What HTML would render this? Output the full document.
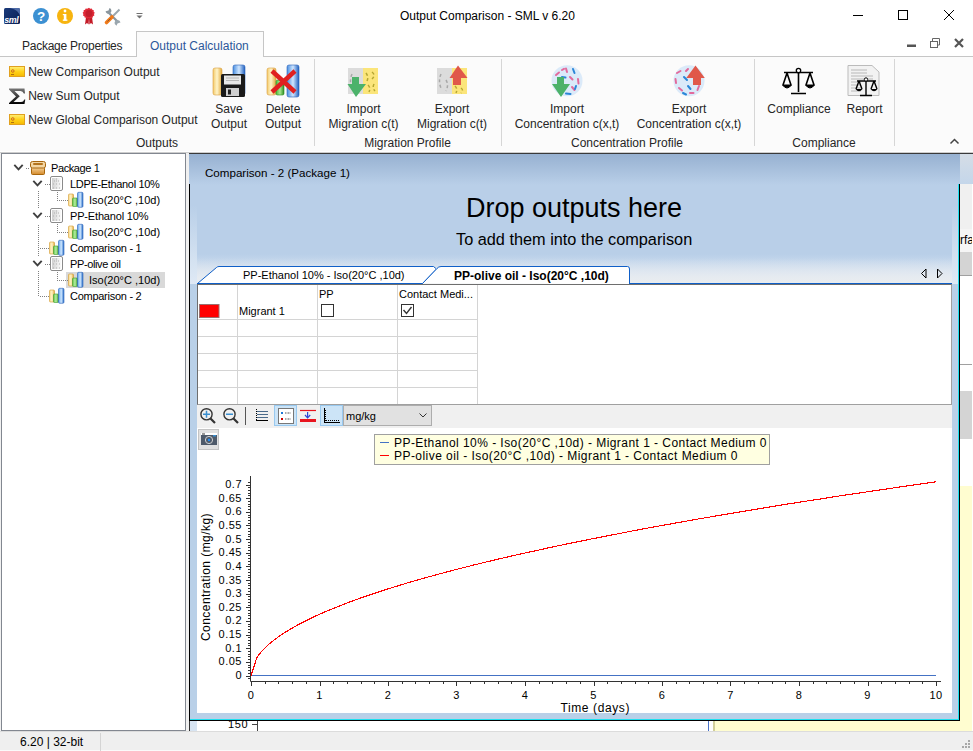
<!DOCTYPE html>
<html><head><meta charset="utf-8">
<style>
*{box-sizing:border-box}
html,body{margin:0;padding:0}
body{width:973px;height:751px;position:relative;overflow:hidden;background:#fff;font-family:"Liberation Sans",sans-serif;color:#1e1e1e}
.a{position:absolute}
.t{position:absolute;white-space:nowrap;line-height:1}
.s12{font-size:12px}
.s11{font-size:11px}
.lab{font-size:11px;letter-spacing:.5px;color:#000}
.rb{color:#262626}
.c{width:200px;text-align:center}
</style></head><body>

<!-- ===== TITLE BAR ===== -->
<div class="a" id="title" style="left:0;top:0;width:973px;height:31px;background:#fff"></div>
<div class="t s12" style="left:400px;top:10px;color:#000">Output Comparison - SML v 6.20</div>
<svg class="a" style="left:0;top:0" width="973" height="56" viewBox="0 0 973 56">
 <defs>
  <linearGradient id="smlg" x1="0" y1="0" x2="1" y2="1"><stop offset="0" stop-color="#1a3a7a"/><stop offset="1" stop-color="#0a1f55"/></linearGradient>
 </defs>
 <rect x="4" y="8" width="16" height="16" rx="1.5" fill="url(#smlg)"/>
 <path d="M10 8 H18.5 Q20 8 20 9.5 V17 Q19 9.5 10 8Z" fill="#4e6aa6"/>
 <text x="4.2" y="22.6" font-family="Liberation Sans" font-weight="bold" font-style="italic" font-size="8.8" letter-spacing="-0.3" fill="#fff">sml</text>
 <circle cx="41" cy="16" r="8" fill="#3c90d2"/>
 <text x="41.2" y="21" text-anchor="middle" font-family="Liberation Sans" font-weight="bold" font-size="13.5" fill="#fff">?</text>
 <circle cx="65" cy="16" r="8" fill="#f7b40f"/>
 <rect x="63.8" y="14" width="2.6" height="6.5" fill="#fff"/><rect x="62.8" y="19.5" width="4.6" height="1.3" fill="#fff"/><rect x="62.8" y="14" width="2" height="1.2" fill="#fff"/>
 <circle cx="65" cy="11" r="1.4" fill="#fff"/>
 <path d="M86 17 L85 24.5 L87 23 L88.6 24.5 L89 18Z M89 18 L89.4 24.5 L91 23 L93 24.5 L92 17Z" fill="#c41a26"/>
 <path d="M89 7.8 l1.2 1 1.5-.4 .6 1.4 1.5.4 -.1 1.5 1.1 1.1 -.8 1.3 .4 1.5 -1.4.6 -.4 1.5 -1.5-.1 -1.1 1.1 -1.3-.8 -1.3.8 -1.1-1.1 -1.5.1 -.4-1.5 -1.4-.6 .4-1.5 -.8-1.3 1.1-1.1 -.1-1.5 1.5-.4 .6-1.4 1.5.4Z" fill="#e02a38"/>
 <circle cx="89" cy="13.6" r="3.5" fill="#c41e2c"/>
 <path d="M108 12 L118 22" stroke="#8a969e" stroke-width="2.2"/>
 <path d="M105.5 11.5 a3 3 0 1 0 4 -3.5 l-1 2.5 -2 0.5z" fill="#8a969e"/>
 <path d="M120.5 22.5 a3 3 0 1 0 -4 3.2 l1 -2.3 2 -0.6z" fill="#9aa6ae"/>
 <path d="M119.5 9.5 L113 16" stroke="#9aa6ae" stroke-width="2"/>
 <path d="M112 17 L106.5 22.5" stroke="#f07a1a" stroke-width="3.6" stroke-linecap="round"/>
 <path d="M110.5 18.5 L107.5 21.5" stroke="#8a5a30" stroke-width="1"/>
 <path d="M136.5 13.5H142.5" stroke="#707070" stroke-width="1"/>
 <path d="M136.5 15.5 L139.5 18.5 L142.5 15.5Z" fill="#707070"/>
 <!-- window controls -->
 <path d="M853 15.5H863" stroke="#000" stroke-width="1"/>
 <rect x="898.5" y="10.5" width="9" height="9" fill="none" stroke="#000" stroke-width="1"/>
 <path d="M944 10 L954 20 M954 10 L944 20" stroke="#000" stroke-width="1"/>
 <!-- mdi buttons -->
 <rect x="907" y="44.5" width="9" height="2.5" fill="#555"/>
 <rect x="930.5" y="41.5" width="7" height="6" fill="none" stroke="#666" stroke-width="1"/>
 <path d="M932.5 41.5V38.5H939.5V45H937.5" fill="none" stroke="#666" stroke-width="1"/>
 <path d="M955 39 L963 47 M963 39 L955 47" stroke="#555" stroke-width="2.2"/>
</svg>

<!-- ===== TAB ROW ===== -->
<div class="a" style="left:0;top:56px;width:973px;height:1px;background:#c6c6c6"></div>
<div class="t s12" style="left:22px;top:40px;color:#262626;letter-spacing:-0.25px">Package Properties</div>
<div class="a" style="left:136px;top:31px;width:128px;height:26px;border:1px solid #c6c6c6;border-bottom:none;background:#fbfbfb"></div>
<div class="t s12" style="left:150px;top:40px;color:#2b579a">Output Calculation</div>

<!-- ===== RIBBON ===== -->
<div class="a" style="left:0;top:57px;width:973px;height:95px;background:#fbfbfb"></div>
<div class="a" style="left:0;top:151px;width:973px;height:1px;background:#fff"></div>
<div class="a" style="left:0;top:152px;width:973px;height:1px;background:#cdcdcd"></div>
<div class="a" style="left:314px;top:59px;width:1px;height:87px;background:#d6d6d6"></div>
<div class="a" style="left:501px;top:59px;width:1px;height:87px;background:#d6d6d6"></div>
<div class="a" style="left:754px;top:59px;width:1px;height:87px;background:#d6d6d6"></div>
<div class="a" style="left:894px;top:59px;width:1px;height:87px;background:#d6d6d6"></div>

<div class="t s12 rb" style="left:28.2px;top:66px">New Comparison Output</div>
<div class="t s12 rb" style="left:28.2px;top:90px">New Sum Output</div>
<div class="t s12 rb" style="left:28.2px;top:114px">New Global Comparison Output</div>

<div class="t s12 rb c" style="left:129px;top:103px">Save</div>
<div class="t s12 rb c" style="left:129px;top:118px">Output</div>
<div class="t s12 rb c" style="left:183px;top:103px">Delete</div>
<div class="t s12 rb c" style="left:183px;top:118px">Output</div>
<div class="t s12 rb c" style="left:263.5px;top:103px">Import</div>
<div class="t s12 rb c" style="left:263.5px;top:118px">Migration c(t)</div>
<div class="t s12 rb c" style="left:352px;top:103px">Export</div>
<div class="t s12 rb c" style="left:352px;top:118px">Migration c(t)</div>
<div class="t s12 rb c" style="left:467px;top:103px">Import</div>
<div class="t s12 rb c" style="left:467px;top:118px">Concentration c(x,t)</div>
<div class="t s12 rb c" style="left:589px;top:103px">Export</div>
<div class="t s12 rb c" style="left:589px;top:118px">Concentration c(x,t)</div>
<div class="t s12 rb c" style="left:699px;top:103px">Compliance</div>
<div class="t s12 rb c" style="left:764.5px;top:103px">Report</div>

<div class="t s12 rb c" style="left:57px;top:137px">Outputs</div>
<div class="t s12 rb c" style="left:307.5px;top:137px">Migration Profile</div>
<div class="t s12 rb c" style="left:527px;top:137px">Concentration Profile</div>
<div class="t s12 rb c" style="left:724px;top:137px">Compliance</div>

<svg class="a" style="left:0;top:57px" width="973" height="95" viewBox="0 57 973 95">
 <defs>
  <linearGradient id="ycard" x1="0" y1="0" x2="0" y2="1"><stop offset="0" stop-color="#fff07a"/><stop offset=".5" stop-color="#ffd21a"/><stop offset="1" stop-color="#f5b800"/></linearGradient>
  <linearGradient id="sig" x1="0" y1="0" x2="0" y2="1"><stop offset="0" stop-color="#777"/><stop offset="1" stop-color="#000"/></linearGradient>
  <linearGradient id="by" x1="0" x2="1"><stop offset="0" stop-color="#f3c96a"/><stop offset=".45" stop-color="#fff4c8"/><stop offset="1" stop-color="#e2a83a"/></linearGradient>
  <linearGradient id="bg2" x1="0" x2="1"><stop offset="0" stop-color="#4cb83a"/><stop offset=".5" stop-color="#a8e890"/><stop offset="1" stop-color="#2e8e22"/></linearGradient>
  <linearGradient id="bb2" x1="0" x2="1"><stop offset="0" stop-color="#4a8ee0"/><stop offset=".5" stop-color="#cfe6ff"/><stop offset="1" stop-color="#1f5fbf"/></linearGradient>
 </defs>
 <!-- small cards -->
 <g id="card"><rect x="9.5" y="66.5" width="15" height="10" fill="url(#ycard)" stroke="#e0a020" stroke-width="1"/><circle cx="12.8" cy="71" r="1.3" fill="none" stroke="#c05020" stroke-width=".8"/><path d="M11 74.5h3" stroke="#b07010" stroke-width="1"/></g>
 <use href="#card" transform="translate(0,48)"/>
 <path d="M9 88.5 H24.5 L25 93.5 H23.8 Q23 91 20.5 91 H14.5 L19.8 96.3 L13.5 102 H21 Q23.5 102 24.3 99.5 H25.3 L24.5 104 H9 V103 L16 96.5 L9 89.5Z" fill="url(#sig)"/>
 <!-- save icon -->
 <rect x="213" y="68" width="9" height="27" rx="2" fill="url(#by)" stroke="#d9a040" stroke-width=".6"/>
 <rect x="233" y="65" width="12" height="30" rx="2" fill="url(#bb2)" stroke="#2a62b8" stroke-width=".6"/>
 <rect x="221" y="74" width="24" height="23" rx="1.5" fill="#1a1a1a"/>
 <rect x="224" y="75.5" width="17" height="9" fill="#e8e8e8"/>
 <path d="M226 78h13 M226 80.5h13" stroke="#aaa" stroke-width=".8"/>
 <rect x="226" y="88" width="13" height="8" fill="#cfcfcf"/>
 <rect x="228" y="89.5" width="3" height="5" fill="#222"/>
 <!-- delete icon -->
 <rect x="267" y="68" width="9" height="27" rx="2" fill="url(#by)" stroke="#d9a040" stroke-width=".6"/>
 <rect x="276" y="80" width="8" height="15" rx="1.5" fill="url(#bg2)" stroke="#2e8e22" stroke-width=".6"/>
 <rect x="287" y="65" width="12" height="32" rx="2" fill="url(#bb2)" stroke="#2a62b8" stroke-width=".6"/>
 <path d="M272 71 L295 92 M295 71 L272 92" stroke="#e02020" stroke-width="4.5"/>
 <!-- import migration -->
 <rect x="348" y="68" width="15" height="26" fill="#dcdcdc"/>
 <rect x="363" y="68" width="15" height="26" fill="#fbe57a"/>
 <g fill="none" stroke="#a8a8a8" stroke-width="1.5" stroke-dasharray="3 2.5"><path d="M352 74 Q349 81 352 88"/><path d="M357 80 Q360 85 357 91"/></g>
 <g fill="none" stroke="#b5a632" stroke-width="1.5" stroke-dasharray="3 2.5"><path d="M366 73 Q369 77 367 81 M372 72 Q376 75 372 79 M368 85 Q371 88 369 92 M374 84 Q372 88 375 91"/></g>
 <path d="M352 77 H359 V84 H366 L356 97 L347.5 84 H352Z" fill="#4cb26a"/>
 <!-- export migration -->
 <rect x="437" y="68" width="15" height="26" fill="#dcdcdc"/>
 <rect x="452" y="68" width="15" height="26" fill="#fbe57a"/>
 <g fill="none" stroke="#a8a8a8" stroke-width="1.5" stroke-dasharray="3 2.5"><path d="M441 74 Q438 81 441 88"/><path d="M446 80 Q449 85 446 91"/></g>
 <g fill="none" stroke="#b5a632" stroke-width="1.5" stroke-dasharray="3 2.5"><path d="M455 86 Q458 89 456 93 M461 88 Q464 90 461 93"/></g>
 <path d="M453 85 V78 H449.5 L458 65.5 L467.5 78 H461 V85Z" fill="#e0584a"/>
 <!-- import concentration -->
 <circle cx="567" cy="80.7" r="15.5" fill="#dbeaf9"/>
 <g fill="none" stroke="#e26a9c" stroke-width="2" stroke-linecap="round"><path d="M556 75 L559 72.5 M566 68.5 L567 72 M570 77 L572.5 79.5 M578 79 L578.5 83.5 M572 87 L574.5 90 M558 81.5 L561 83.5 M562 70 L564 68.8"/></g>
 <g fill="none" stroke="#2a86d8" stroke-width="2" stroke-linecap="round"><path d="M573 69 L574.5 73 M562 77 L565.5 77.5 M566 93.5 L570.5 94 M576 86 L575 89"/></g>
 <path d="M557 77 H564 V84 H570 L561 97 L552 84 H557Z" fill="#4cb26a"/>
 <!-- export concentration -->
 <circle cx="689" cy="80.7" r="15.5" fill="#dbeaf9"/>
 <g fill="none" stroke="#e26a9c" stroke-width="2" stroke-linecap="round"><path d="M677 73 L680.5 71 M675.5 79 L676 83 M679 88 L682 90.5 M686 71 L688 69 M699 86 L697.5 90 M690 93 L693.5 93"/></g>
 <g fill="none" stroke="#2a86d8" stroke-width="2" stroke-linecap="round"><path d="M684 77 L687 80 M688 86 L690.5 89 M683 93 L686 94.5 M694 79 L695 82"/></g>
 <path d="M693 85 V78 H686.3 L695.5 65.5 L704.8 78 H701 V85Z" fill="#e0584a"/>
 <!-- compliance scale -->
 <g stroke="#000" stroke-width="1.6" fill="none">
  <path d="M798.5 72 V92 M791 93.5 H806 M784 72.5 H813"/>
  <path d="M787 73 L783 85 M787 73 L791 85 M810 73 L806 85 M810 73 L814 85"/>
 </g>
 <circle cx="798.5" cy="70.5" r="2.2" fill="#fff" stroke="#000" stroke-width="1.3"/>
 <path d="M782.5 85 H791.5 Q787 91 782.5 85Z M805.5 85 H814.5 Q810 91 805.5 85Z" fill="#000" stroke="#000" stroke-width="1"/>
 <!-- report -->
 <path d="M848 65.5 H872 L879 72 V95.5 H848Z" fill="#f2f2f2" stroke="#bbb" stroke-width="1"/>
 <g stroke="#b8b8b8" stroke-width="1"><path d="M851 70h16 M851 73h16 M851 76h22 M851 79h22 M851 82h10 M851 85h10 M851 88h10 M851 91h10"/></g>
 <g stroke="#000" stroke-width="1.4" fill="none">
  <path d="M866 80 V95 M860 95.5 H872 M857 81 H876"/>
  <path d="M859 81 L856 89 M859 81 L862 89 M874 81 L871 89 M874 81 L877 89"/>
 </g>
 <circle cx="866" cy="79.5" r="1.7" fill="#fff" stroke="#000" stroke-width="1"/>
 <path d="M855.5 89 H862.5 Q859 93.5 855.5 89Z M870.5 89 H877.5 Q874 93.5 870.5 89Z" fill="#000"/>
 <!-- collapse -->
 <path d="M950.5 143.5 L954.5 139.5 L958.5 143.5" fill="none" stroke="#444" stroke-width="1.5"/>
</svg>

<!-- ===== TREE PANEL ===== -->
<div class="a" style="left:0;top:153px;width:186px;height:578px;background:#f0f0f0"></div>
<div class="a" style="left:1px;top:153px;width:185px;height:578px;background:#fff;border:1px solid #828790"></div>

<svg class="a" style="left:0;top:153px" width="186" height="160" viewBox="0 153 186 160">
<defs>
<linearGradient id="gy" x1="0" x2="1"><stop offset="0" stop-color="#f7d88a"/><stop offset=".5" stop-color="#fff3c8"/><stop offset="1" stop-color="#e0a93a"/></linearGradient>
<linearGradient id="gg" x1="0" x2="1"><stop offset="0" stop-color="#5cc24a"/><stop offset=".5" stop-color="#b8f0a0"/><stop offset="1" stop-color="#3a9a2a"/></linearGradient>
<linearGradient id="gb" x1="0" x2="1"><stop offset="0" stop-color="#5a9ee8"/><stop offset=".5" stop-color="#d0e8ff"/><stop offset="1" stop-color="#2a6ec8"/></linearGradient>
<linearGradient id="gp" x1="0" y1="0" x2="0" y2="1"><stop offset="0" stop-color="#f6d29a"/><stop offset="1" stop-color="#d48a2a"/></linearGradient>
<linearGradient id="gdoc" x1="0" x2="1"><stop offset="0" stop-color="#d0d0d0"/><stop offset="1" stop-color="#fafafa"/></linearGradient>
<g id="bars"><rect x="0.5" y="2" width="5" height="12" rx="1" fill="url(#gy)" stroke="#d49a30" stroke-width=".6"/><rect x="4.5" y="6" width="5" height="8.5" rx="1" fill="url(#gg)" stroke="#3c9a2c" stroke-width=".6"/><rect x="9.5" y="0.3" width="5.5" height="15" rx="1.2" fill="url(#gb)" stroke="#2a62b8" stroke-width=".6"/></g>
</defs>
<path d="M14.3 164.8 L18.5 169.3 L22.7 164.8" fill="none" stroke="#404040" stroke-width="1.9"/>
<g transform="translate(30,161)"><rect x="1.5" y="6.5" width="13" height="7" rx="1" fill="url(#gp)" stroke="#a8660c" stroke-width="1"/><rect x="0.5" y="0.5" width="15" height="6.5" rx="2" fill="#f3d6a4" stroke="#a8660c" stroke-width="1"/><rect x="3" y="2" width="10" height="2" rx="1" fill="#b4741e"/></g>
<path d="M33.3 180.8 L37.5 185.3 L41.7 180.8" fill="none" stroke="#404040" stroke-width="1.9"/>
<rect x="50.5" y="176.5" width="12" height="14" rx="1.5" fill="#fff" stroke="#8a8a8a" stroke-width="1"/><rect x="52" y="178.0" width="9" height="11" fill="url(#gdoc)"/><g fill="#b0b0b0"><rect x="54" y="180.5" width="1" height="1"/><rect x="56" y="180.5" width="1" height="1"/><rect x="58" y="180.5" width="1" height="1"/><rect x="53" y="183.5" width="1" height="1"/><rect x="56" y="183.5" width="1" height="1"/><rect x="59" y="183.5" width="1" height="1"/><rect x="53" y="187.5" width="1" height="1"/><rect x="56" y="187.5" width="1" height="1"/><rect x="59" y="187.5" width="1" height="1"/><rect x="56" y="178.5" width="1" height="1"/></g>
<use href="#bars" transform="translate(68,192)"/>
<path d="M33.3 212.8 L37.5 217.3 L41.7 212.8" fill="none" stroke="#404040" stroke-width="1.9"/>
<rect x="50.5" y="208.5" width="12" height="14" rx="1.5" fill="#fff" stroke="#8a8a8a" stroke-width="1"/><rect x="52" y="210.0" width="9" height="11" fill="url(#gdoc)"/><g fill="#b0b0b0"><rect x="54" y="212.5" width="1" height="1"/><rect x="56" y="212.5" width="1" height="1"/><rect x="58" y="212.5" width="1" height="1"/><rect x="53" y="215.5" width="1" height="1"/><rect x="56" y="215.5" width="1" height="1"/><rect x="59" y="215.5" width="1" height="1"/><rect x="53" y="219.5" width="1" height="1"/><rect x="56" y="219.5" width="1" height="1"/><rect x="59" y="219.5" width="1" height="1"/><rect x="56" y="210.5" width="1" height="1"/></g>
<use href="#bars" transform="translate(68,224)"/>
<use href="#bars" transform="translate(49,240)"/>
<path d="M33.3 260.8 L37.5 265.3 L41.7 260.8" fill="none" stroke="#404040" stroke-width="1.9"/>
<rect x="50.5" y="256.5" width="12" height="14" rx="1.5" fill="#fff" stroke="#8a8a8a" stroke-width="1"/><rect x="52" y="258.0" width="9" height="11" fill="url(#gdoc)"/><g fill="#b0b0b0"><rect x="54" y="260.5" width="1" height="1"/><rect x="56" y="260.5" width="1" height="1"/><rect x="58" y="260.5" width="1" height="1"/><rect x="53" y="263.5" width="1" height="1"/><rect x="56" y="263.5" width="1" height="1"/><rect x="59" y="263.5" width="1" height="1"/><rect x="53" y="267.5" width="1" height="1"/><rect x="56" y="267.5" width="1" height="1"/><rect x="59" y="267.5" width="1" height="1"/><rect x="56" y="258.5" width="1" height="1"/></g>
<rect x="66" y="272" width="99" height="16" fill="#d9d9d9"/>
<use href="#bars" transform="translate(68,272)"/>
<use href="#bars" transform="translate(49,288)"/>
<g fill="#808080"><rect x="38" y="191" width="1" height="1"/><rect x="38" y="193" width="1" height="1"/><rect x="38" y="195" width="1" height="1"/><rect x="38" y="197" width="1" height="1"/><rect x="38" y="199" width="1" height="1"/><rect x="38" y="201" width="1" height="1"/><rect x="38" y="203" width="1" height="1"/><rect x="38" y="205" width="1" height="1"/><rect x="38" y="207" width="1" height="1"/><rect x="38" y="225" width="1" height="1"/><rect x="38" y="227" width="1" height="1"/><rect x="38" y="229" width="1" height="1"/><rect x="38" y="231" width="1" height="1"/><rect x="38" y="233" width="1" height="1"/><rect x="38" y="235" width="1" height="1"/><rect x="38" y="237" width="1" height="1"/><rect x="38" y="239" width="1" height="1"/><rect x="38" y="241" width="1" height="1"/><rect x="38" y="243" width="1" height="1"/><rect x="38" y="245" width="1" height="1"/><rect x="38" y="247" width="1" height="1"/><rect x="38" y="249" width="1" height="1"/><rect x="38" y="251" width="1" height="1"/><rect x="38" y="253" width="1" height="1"/><rect x="38" y="255" width="1" height="1"/><rect x="38" y="271" width="1" height="1"/><rect x="38" y="273" width="1" height="1"/><rect x="38" y="275" width="1" height="1"/><rect x="38" y="277" width="1" height="1"/><rect x="38" y="279" width="1" height="1"/><rect x="38" y="281" width="1" height="1"/><rect x="38" y="283" width="1" height="1"/><rect x="38" y="285" width="1" height="1"/><rect x="38" y="287" width="1" height="1"/><rect x="38" y="289" width="1" height="1"/><rect x="38" y="291" width="1" height="1"/><rect x="38" y="293" width="1" height="1"/><rect x="38" y="295" width="1" height="1"/><rect x="26" y="168" width="1" height="1"/><rect x="28" y="168" width="1" height="1"/><rect x="45" y="184" width="1" height="1"/><rect x="47" y="184" width="1" height="1"/><rect x="49" y="184" width="1" height="1"/><rect x="57" y="192" width="1" height="1"/><rect x="57" y="194" width="1" height="1"/><rect x="57" y="196" width="1" height="1"/><rect x="57" y="198" width="1" height="1"/><rect x="57" y="200" width="1" height="1"/><rect x="59" y="200" width="1" height="1"/><rect x="61" y="200" width="1" height="1"/><rect x="63" y="200" width="1" height="1"/><rect x="65" y="200" width="1" height="1"/><rect x="67" y="200" width="1" height="1"/><rect x="45" y="216" width="1" height="1"/><rect x="47" y="216" width="1" height="1"/><rect x="49" y="216" width="1" height="1"/><rect x="57" y="224" width="1" height="1"/><rect x="57" y="226" width="1" height="1"/><rect x="57" y="228" width="1" height="1"/><rect x="57" y="230" width="1" height="1"/><rect x="57" y="232" width="1" height="1"/><rect x="59" y="232" width="1" height="1"/><rect x="61" y="232" width="1" height="1"/><rect x="63" y="232" width="1" height="1"/><rect x="65" y="232" width="1" height="1"/><rect x="67" y="232" width="1" height="1"/><rect x="40" y="248" width="1" height="1"/><rect x="42" y="248" width="1" height="1"/><rect x="44" y="248" width="1" height="1"/><rect x="46" y="248" width="1" height="1"/><rect x="48" y="248" width="1" height="1"/><rect x="45" y="264" width="1" height="1"/><rect x="47" y="264" width="1" height="1"/><rect x="49" y="264" width="1" height="1"/><rect x="57" y="272" width="1" height="1"/><rect x="57" y="274" width="1" height="1"/><rect x="57" y="276" width="1" height="1"/><rect x="57" y="278" width="1" height="1"/><rect x="57" y="280" width="1" height="1"/><rect x="59" y="280" width="1" height="1"/><rect x="61" y="280" width="1" height="1"/><rect x="63" y="280" width="1" height="1"/><rect x="65" y="280" width="1" height="1"/><rect x="67" y="280" width="1" height="1"/><rect x="40" y="296" width="1" height="1"/><rect x="42" y="296" width="1" height="1"/><rect x="44" y="296" width="1" height="1"/><rect x="46" y="296" width="1" height="1"/><rect x="48" y="296" width="1" height="1"/></g>
</svg>
<div class="t s11" style="left:51px;top:163px;color:#000;letter-spacing:-0.4px">Package 1</div>
<div class="t s11" style="left:70px;top:179px;color:#000;letter-spacing:-0.33px">LDPE-Ethanol 10%</div>
<div class="t s11" style="left:89px;top:195px;color:#000">Iso(20°C ,10d)</div>
<div class="t s11" style="left:70px;top:211px;color:#000;letter-spacing:-0.17px">PP-Ethanol 10%</div>
<div class="t s11" style="left:89px;top:227px;color:#000">Iso(20°C ,10d)</div>
<div class="t s11" style="left:70px;top:243px;color:#000;letter-spacing:-0.27px">Comparison - 1</div>
<div class="t s11" style="left:70px;top:259px;color:#000;letter-spacing:-0.38px">PP-olive oil</div>
<div class="t s11" style="left:89px;top:275px;color:#000">Iso(20°C ,10d)</div>
<div class="t s11" style="left:70px;top:291px;color:#000;letter-spacing:-0.27px">Comparison - 2</div>

<!-- ===== MDI AREA ===== -->
<div class="a" style="left:186px;top:153px;width:3px;height:578px;background:#f0f0f0"></div>
<div class="a" style="left:189px;top:153px;width:784px;height:578px;background:#fff"></div>
<!-- background window right strip -->
<div class="a" style="left:960px;top:153px;width:13px;height:31px;background:linear-gradient(#d5dde6,#c4d6ea);border-top:1px solid #3a3a3a"></div>
<div class="a" style="left:960px;top:184px;width:12px;height:45px;background:#f0f0f0"></div>
<div class="a" style="left:960px;top:229px;width:12px;height:23px;background:#f5f5f5;overflow:hidden"><div class="t s12" style="left:0;top:5px;color:#000">rfa</div></div>
<div class="a" style="left:960px;top:252px;width:12px;height:24px;background:#d4d4d4;border-bottom:1px solid #a0a0a0"></div>
<div class="a" style="left:960px;top:364px;width:12px;height:1px;background:#a0a0a0"></div>
<div class="a" style="left:960px;top:391px;width:12px;height:48px;background:#d4d4d4"></div>
<div class="a" style="left:960px;top:486px;width:12px;height:245px;background:#fffdd0"></div>
<!-- bottom background chart -->
<div class="a" style="left:190px;top:721px;width:7px;height:10px;background:#d7e4f2"></div>
<div class="a" style="left:189px;top:721px;width:1px;height:10px;background:#333"></div>
<div class="t" style="left:228px;top:719px;font-size:11px;letter-spacing:.6px;color:#000">150</div>
<div class="a" style="left:252px;top:724px;width:5px;height:1px;background:#444"></div>
<div class="a" style="left:257px;top:721px;width:1px;height:10px;background:#444"></div>
<div class="a" style="left:708px;top:721px;width:1px;height:10px;background:#4a72c8"></div>
<div class="a" style="left:713px;top:721px;width:247px;height:10px;background:#fffdd0"></div>
<div class="a" style="left:713px;top:721px;width:2px;height:10px;background:#d2cf9a"></div>

<!-- comparison window frame -->
<div class="a" style="left:189px;top:184px;width:771px;height:537px;background:#1ee0f0"></div>
<div class="a" style="left:190px;top:185px;width:768px;height:534px;background:#b9d0e8"></div>
<div class="a" style="left:197px;top:428px;width:755px;height:285px;background:#fff"></div>

<!-- comparison header gradient -->
<div class="a" style="left:189px;top:153px;width:771px;height:131px;background:linear-gradient(#98b2d2 1px,#b9cfe8 31px,#b9cfe8 100px,#e8eff8 131px);border-top:1px solid #3a3a3a"></div>
<div class="a" style="left:189px;top:184px;width:771px;height:537px;border:1px solid #000;border-top:none"></div>
<div class="a" style="left:958px;top:184px;width:1px;height:100px;background:#1ee0f0"></div>
<div class="t" style="left:205px;top:167px;font-size:11.6px;color:#000">Comparison - 2 (Package 1)</div>
<div class="t" style="left:466px;top:194.5px;font-size:27px;color:#000">Drop outputs here</div>
<div class="t" style="left:456px;top:231px;font-size:16.3px;color:#000">To add them into the comparison</div>

<!-- side light strips in header -->
<div class="a" style="left:190px;top:205px;width:7px;height:79px;background:linear-gradient(#b9cfe8,#d4e2f1 55px,#dfe9f5)"></div>
<div class="a" style="left:952px;top:205px;width:6px;height:79px;background:linear-gradient(#b9cfe8,#d4e2f1 55px,#dfe9f5)"></div>
<!-- tab strip -->
<div class="a" style="left:197px;top:258px;width:755px;height:26px;background:linear-gradient(rgba(185,207,232,0),#e9ecef)"></div>
<svg class="a" style="left:189px;top:255px" width="771" height="35" viewBox="189 255 771 35">
 <path d="M197.5 283.5 L216.5 267.5 Q217.5 266.5 219 266.5 L433.5 266.5 L436.5 269 L422.5 283.5 Z" fill="#fff" stroke="#0f5fc8" stroke-width="1"/>
 <path d="M422.5 283.5 L437 268.5 Q438.5 266.5 441 266.5 L627.5 266.5 Q629.5 266.5 629.5 269 L629.5 284" fill="#fff" stroke="#0f5fc8" stroke-width="1"/>
 <path d="M197 283.5 H422.5 M629.5 283.5 H952" stroke="#0f5fc8" stroke-width="1"/>
 <path d="M921.5 273.5 L926 269 L926 278 Z" fill="none" stroke="#000" stroke-width="1"/>
 <path d="M937.5 269 L942 273.5 L937.5 278 Z" fill="none" stroke="#000" stroke-width="1"/>
</svg>
<div class="t" style="left:243px;top:270px;font-size:11px;color:#000">PP-Ethanol 10% - Iso(20°C ,10d)</div>
<div class="t" style="left:454px;top:269.5px;font-size:12px;font-weight:bold;color:#000">PP-olive oil - Iso(20°C ,10d)</div>

<!-- grid panel -->
<div class="a" style="left:197px;top:284px;width:755px;height:121px;background:#fff;border-top:1px solid #6e6e6e;border-left:1px solid #6e6e6e;border-right:1px solid #a0a0a0;border-bottom:1px solid #a0a0a0"></div>
<svg class="a" style="left:197px;top:284px" width="290" height="121" viewBox="197 284 290 121">
 <g stroke="#d4d4d4" stroke-width="1">
  <path d="M237.5 285V404 M317.5 285V404 M397.5 285V404 M477.5 285V404"/>
  <path d="M198 319.5H478 M198 336.5H478 M198 353.5H478 M198 370.5H478 M198 387.5H478"/>
 </g>
 <rect x="199.5" y="304.5" width="19.5" height="13" fill="#f00" stroke="#9a7070" stroke-width="1"/>
 <rect x="321.5" y="304.5" width="12" height="12" fill="#fff" stroke="#333"/>
 <rect x="401.5" y="304.5" width="12" height="12" fill="#fff" stroke="#333"/>
 <path d="M403.5 310 L406.5 313.5 L411.5 307" fill="none" stroke="#333" stroke-width="1.4"/>
</svg>
<div class="t s11" style="left:239px;top:306px;color:#000">Migrant 1</div>
<div class="t s11" style="left:319px;top:289px;color:#000">PP</div>
<div class="t s11" style="left:399px;top:289px;color:#000">Contact Medi...</div>

<!-- toolbar -->
<div class="a" style="left:197px;top:405px;width:755px;height:23px;background:#f0f0f0"></div>
<svg class="a" style="left:197px;top:404px" width="250" height="48" viewBox="197 404 250 48">
 <g fill="none" stroke="#333" stroke-width="1.4">
  <circle cx="206.5" cy="414.3" r="5.6"/><circle cx="229.5" cy="414.3" r="5.6"/>
 </g>
 <g stroke="#333" stroke-width="2.2"><path d="M210.5 418.5 L215 423 M233.5 418.5 L238 423"/></g>
 <g stroke="#3a8fd0" stroke-width="1.5"><path d="M203 414.3H210 M206.5 410.8V417.8 M226 414.3H233"/></g>
 <path d="M245.5 407V425" stroke="#555" stroke-width="1"/>
 <path d="M256.5 409V421" stroke="#000" stroke-width="1" stroke-dasharray="1 1"/>
 <g stroke="#4a6a8a" stroke-width="1"><path d="M257 411.5H268 M257 414.5H268 M257 417.5H268"/></g>
 <path d="M256 420.5H268" stroke="#000" stroke-width="1"/>
 <rect x="274.5" y="405.5" width="22" height="20" fill="#cce4f7" stroke="#99c9ef"/>
 <rect x="278.5" y="408.5" width="15" height="15" fill="#fff" stroke="#777"/>
 <rect x="281" y="412" width="2" height="2" fill="#1e7ad8"/><rect x="281" y="418" width="2" height="2" fill="#c00"/>
 <path d="M285 413H291 M285 419H291" stroke="#555" stroke-width="1" stroke-dasharray="1 0.5"/>
 <path d="M300 410.5H316" stroke="#e8141e" stroke-width="1.2"/>
 <rect x="300" y="419" width="16" height="3" fill="#e8141e"/>
 <path d="M307.6 412V417" stroke="#2c44d6" stroke-width="1.2"/><path d="M305 415 L307.6 417.8 L310.2 415" fill="none" stroke="#2c44d6" stroke-width="1.2"/>
 <rect x="320.5" y="405.5" width="22" height="20" fill="#cce4f7" stroke="#99c9ef"/>
 <path d="M324.5 408V423 M324 422.5H340" stroke="#000" stroke-width="1"/>
 <path d="M325 410.5h1 M325 412.5h1 M325 414.5h1 M325 416.5h1 M325 418.5h1 M325 420.5h1 M326.5 421v-1 M328.5 421v-1 M330.5 421v-1 M332.5 421v-1 M334.5 421v-1 M336.5 421v-1 M338.5 421v-1" stroke="#000" stroke-width="1"/>
 <rect x="343.5" y="405.5" width="88" height="20" fill="#e1e1e1" stroke="#adadad"/>
 <path d="M419.5 413.5 L423 417 L426.5 413.5" fill="none" stroke="#333" stroke-width="1"/>
 <rect x="198.5" y="429.5" width="20" height="20" fill="#e1e1e1" stroke="#c4c4c4"/>
 <rect x="201" y="435" width="16" height="10" fill="#4e5a6a"/>
 <rect x="201" y="433" width="16" height="2" fill="#fff"/>
 <path d="M202 434H205" stroke="#333"/>
 <rect x="213" y="435" width="3" height="1.5" fill="#3a8fd0"/>
 <circle cx="209" cy="440" r="3.6" fill="#4e5a6a" stroke="#d0d0d0" stroke-width="1"/>
 <circle cx="209" cy="440" r="1.2" fill="#1e90ff"/>
</svg>
<div class="t s11" style="left:346px;top:411px;color:#000">mg/kg</div>

<!-- chart -->
<svg class="a" style="left:197px;top:428px" width="755" height="285" viewBox="197 428 755 285">
<path d="M250.5 476V681.5 H941" fill="none" stroke="#333" stroke-width="1"/>
<path d="M246 676.5H250 M248 673.5H250 M248 670.5H250 M248 667.5H250 M248 665.5H250 M246 662.5H250 M248 659.5H250 M248 656.5H250 M248 654.5H250 M248 651.5H250 M246 648.5H250 M248 645.5H250 M248 643.5H250 M248 640.5H250 M248 637.5H250 M246 635.5H250 M248 632.5H250 M248 629.5H250 M248 626.5H250 M248 624.5H250 M246 621.5H250 M248 618.5H250 M248 615.5H250 M248 613.5H250 M248 610.5H250 M246 607.5H250 M248 605.5H250 M248 602.5H250 M248 599.5H250 M248 596.5H250 M246 594.5H250 M248 591.5H250 M248 588.5H250 M248 585.5H250 M248 583.5H250 M246 580.5H250 M248 577.5H250 M248 575.5H250 M248 572.5H250 M248 569.5H250 M246 566.5H250 M248 564.5H250 M248 561.5H250 M248 558.5H250 M248 555.5H250 M246 553.5H250 M248 550.5H250 M248 547.5H250 M248 545.5H250 M248 542.5H250 M246 539.5H250 M248 536.5H250 M248 534.5H250 M248 531.5H250 M248 528.5H250 M246 525.5H250 M248 523.5H250 M248 520.5H250 M248 517.5H250 M248 515.5H250 M246 512.5H250 M248 509.5H250 M248 506.5H250 M248 504.5H250 M248 501.5H250 M246 498.5H250 M248 495.5H250 M248 493.5H250 M248 490.5H250 M248 487.5H250 M246 485.5H250 M248 482.5H250 M248 678.5H250 M251.5 682V686 M265.5 682V684 M278.5 682V684 M292.5 682V684 M306.5 682V684 M320.5 682V686 M333.5 682V684 M347.5 682V684 M361.5 682V684 M374.5 682V684 M388.5 682V686 M402.5 682V684 M415.5 682V684 M429.5 682V684 M443.5 682V684 M456.5 682V686 M470.5 682V684 M484.5 682V684 M498.5 682V684 M511.5 682V684 M525.5 682V686 M539.5 682V684 M552.5 682V684 M566.5 682V684 M580.5 682V684 M594.5 682V686 M607.5 682V684 M621.5 682V684 M635.5 682V684 M648.5 682V684 M662.5 682V686 M676.5 682V684 M689.5 682V684 M703.5 682V684 M717.5 682V684 M730.5 682V686 M744.5 682V684 M758.5 682V684 M772.5 682V684 M785.5 682V684 M799.5 682V686 M813.5 682V684 M826.5 682V684 M840.5 682V684 M854.5 682V684 M868.5 682V686 M881.5 682V684 M895.5 682V684 M909.5 682V684 M922.5 682V684 M936.5 682V686" stroke="#333" stroke-width="1"/>
<path d="M251 675.5H936" stroke="#4472c4" stroke-width="1"/>
<polyline points="251.0,675.5 256.9,657.5 260.7,652.4 266.5,646.4 271.3,642.2 280.4,635.4 290.5,629.0 301.3,623.0 312.0,617.7 322.8,612.8 333.6,608.3 344.3,604.0 355.1,600.0 365.8,596.2 376.6,592.6 387.3,589.1 398.1,585.8 408.9,582.5 419.6,579.4 430.4,576.4 441.1,573.5 451.9,570.6 462.7,567.8 473.4,565.1 484.2,562.5 494.9,559.9 505.7,557.4 516.4,554.9 527.2,552.5 538.0,550.2 548.7,547.8 559.5,545.5 570.2,543.3 581.0,541.1 591.7,538.9 602.5,536.8 613.3,534.7 624.0,532.6 634.8,530.5 645.5,528.5 656.3,526.5 667.1,524.6 677.8,522.6 688.6,520.7 699.3,518.8 710.1,517.0 720.8,515.1 731.6,513.3 742.4,511.5 753.1,509.7 763.9,507.9 774.6,506.2 785.4,504.4 796.1,502.7 806.9,501.0 817.7,499.4 828.4,497.7 839.2,496.0 849.9,494.4 860.7,492.8 871.5,491.2 882.2,489.6 893.0,488.0 903.7,486.4 914.5,484.9 925.2,483.4 936.0,481.8" fill="none" stroke="#f00" stroke-width="1.1" shape-rendering="crispEdges"/>
</svg>
<div class="t lab" style="right:731px;top:670.0px">0</div>
<div class="t lab" style="right:731px;top:656.4px">0.05</div>
<div class="t lab" style="right:731px;top:642.7px">0.1</div>
<div class="t lab" style="right:731px;top:629.1px">0.15</div>
<div class="t lab" style="right:731px;top:615.4px">0.2</div>
<div class="t lab" style="right:731px;top:601.8px">0.25</div>
<div class="t lab" style="right:731px;top:588.2px">0.3</div>
<div class="t lab" style="right:731px;top:574.5px">0.35</div>
<div class="t lab" style="right:731px;top:560.9px">0.4</div>
<div class="t lab" style="right:731px;top:547.2px">0.45</div>
<div class="t lab" style="right:731px;top:533.6px">0.5</div>
<div class="t lab" style="right:731px;top:520.0px">0.55</div>
<div class="t lab" style="right:731px;top:506.3px">0.6</div>
<div class="t lab" style="right:731px;top:492.7px">0.65</div>
<div class="t lab" style="right:731px;top:479.0px">0.7</div>
<div class="t lab" style="left:211.0px;width:80px;text-align:center;top:689.7px">0</div>
<div class="t lab" style="left:279.5px;width:80px;text-align:center;top:689.7px">1</div>
<div class="t lab" style="left:348.0px;width:80px;text-align:center;top:689.7px">2</div>
<div class="t lab" style="left:416.5px;width:80px;text-align:center;top:689.7px">3</div>
<div class="t lab" style="left:485.0px;width:80px;text-align:center;top:689.7px">4</div>
<div class="t lab" style="left:553.5px;width:80px;text-align:center;top:689.7px">5</div>
<div class="t lab" style="left:622.0px;width:80px;text-align:center;top:689.7px">6</div>
<div class="t lab" style="left:690.5px;width:80px;text-align:center;top:689.7px">7</div>
<div class="t lab" style="left:759.0px;width:80px;text-align:center;top:689.7px">8</div>
<div class="t lab" style="left:827.5px;width:80px;text-align:center;top:689.7px">9</div>
<div class="t lab" style="left:896.0px;width:80px;text-align:center;top:689.7px">10</div>
<div class="t" style="left:560.5px;top:702px;font-size:12px;letter-spacing:.6px;color:#000">Time (days)</div>
<div class="t" style="left:139.6px;top:571px;width:132px;height:12px;text-align:center;font-size:12px;letter-spacing:.44px;color:#000;transform:rotate(-90deg);transform-origin:66px 6px">Concentration (mg/kg)</div>
<div class="a" style="left:374px;top:434px;width:396px;height:31px;background:#ffffe1;border:1px solid #a0a0a0"></div>
<div class="a" style="left:380px;top:442px;width:9px;height:1px;background:#4472c4"></div>
<div class="a" style="left:380px;top:455px;width:9px;height:1px;background:#f00"></div>
<div class="t" style="left:394px;top:437px;font-size:12px;letter-spacing:0.45px;color:#000">PP-Ethanol 10% - Iso(20°C ,10d) - Migrant 1 - Contact Medium 0</div>
<div class="t" style="left:394px;top:450px;font-size:12px;letter-spacing:0.45px;color:#000">PP-olive oil - Iso(20°C ,10d) - Migrant 1 - Contact Medium 0</div>

<!-- ===== STATUS BAR ===== -->
<div class="a" style="left:0;top:731px;width:973px;height:20px;background:#efefef;border-top:1px solid #dcdcdc;border-bottom:1px solid #fafafa"></div>
<div class="t s12" style="left:20px;top:736px;color:#000">6.20 | 32-bit</div>
<div class="a" style="left:100px;top:733px;width:1px;height:18px;background:#d4d4d4"></div>
<svg class="a" style="left:955px;top:735px" width="18" height="16" viewBox="955 735 18 16"><g fill="#a8a8a8"><rect x="968" y="740" width="2" height="2"/><rect x="965" y="743" width="2" height="2"/><rect x="968" y="743" width="2" height="2"/><rect x="962" y="746" width="2" height="2"/><rect x="965" y="746" width="2" height="2"/><rect x="968" y="746" width="2" height="2"/></g></svg>

</body></html>
